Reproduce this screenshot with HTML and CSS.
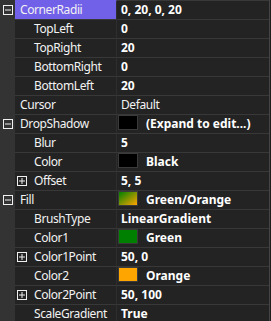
FILE: index.html
```html
<!DOCTYPE html>
<html lang="en">
<head>
  <meta charset="UTF-8">
  <title>Property Grid</title>
  <link rel="stylesheet" href="styles.css">
</head>
<body>
  <div class="grid">
    <div class="row">
      <div class="gutter"><span class="toggle open"></span></div>
      <div class="name selected">CornerRadii</div>
      <div class="value">0, 20, 0, 20</div>
    </div>
    <div class="row">
      <div class="gutter"></div>
      <div class="name child">TopLeft</div>
      <div class="value">0</div>
    </div>
    <div class="row">
      <div class="gutter"></div>
      <div class="name child">TopRight</div>
      <div class="value">20</div>
    </div>
    <div class="row">
      <div class="gutter"></div>
      <div class="name child">BottomRight</div>
      <div class="value">0</div>
    </div>
    <div class="row">
      <div class="gutter"></div>
      <div class="name child">BottomLeft</div>
      <div class="value">20</div>
    </div>
    <div class="row">
      <div class="gutter"></div>
      <div class="name">Cursor</div>
      <div class="value default">Default</div>
    </div>
    <div class="row">
      <div class="gutter"><span class="toggle open"></span></div>
      <div class="name">DropShadow</div>
      <div class="value"><span class="swatch black"></span>(Expand to edit...)</div>
    </div>
    <div class="row">
      <div class="gutter"></div>
      <div class="name child">Blur</div>
      <div class="value">5</div>
    </div>
    <div class="row">
      <div class="gutter"></div>
      <div class="name child">Color</div>
      <div class="value"><span class="swatch black"></span>Black</div>
    </div>
    <div class="row">
      <div class="gutter"></div>
      <div class="name nested"><span class="toggle"></span>Offset</div>
      <div class="value">5, 5</div>
    </div>
    <div class="row">
      <div class="gutter"><span class="toggle open"></span></div>
      <div class="name">Fill</div>
      <div class="value"><span class="swatch gradient"></span>Green/Orange</div>
    </div>
    <div class="row">
      <div class="gutter"></div>
      <div class="name child">BrushType</div>
      <div class="value">LinearGradient</div>
    </div>
    <div class="row">
      <div class="gutter"></div>
      <div class="name child">Color1</div>
      <div class="value"><span class="swatch green"></span>Green</div>
    </div>
    <div class="row">
      <div class="gutter"></div>
      <div class="name nested"><span class="toggle"></span>Color1Point</div>
      <div class="value">50, 0</div>
    </div>
    <div class="row">
      <div class="gutter"></div>
      <div class="name child">Color2</div>
      <div class="value"><span class="swatch orange"></span>Orange</div>
    </div>
    <div class="row">
      <div class="gutter"></div>
      <div class="name nested"><span class="toggle"></span>Color2Point</div>
      <div class="value">50, 100</div>
    </div>
    <div class="row">
      <div class="gutter"></div>
      <div class="name child">ScaleGradient</div>
      <div class="value">True</div>
    </div>
  </div>
</body>
</html>
```
FILE: styles.css
```css
body {
  margin: 0;
  background: #1e1e1e;
  font-family: 'Noto Sans', sans-serif;
  color: #f2f2f2;
}
.grid {
  width: 269px;
  border-right: 1px solid #454545;
  background: #232323;
  overflow: hidden;
}
.row {
  display: flex;
  height: 19px;
}
.gutter {
  width: 15px;
  flex: none;
  background: #333333;
  position: relative;
}
.name {
  width: 96px;
  flex: none;
  padding-left: 5px;
  border-right: 1px solid #2e2e2e;
  border-top: 1px solid #383838;
  font-size: 12px;
  letter-spacing: -0.4px;
  line-height: 18px;
  white-space: nowrap;
  overflow: hidden;
  display: flex;
  align-items: center;
}
.name.selected {
  background: #7160e8;
  border-top-color: #7160e8;
}
.name.child {
  padding-left: 19px;
  width: 82px;
}
.name.nested {
  padding-left: 2px;
  width: 99px;
}
.name.nested .toggle {
  margin-right: 7px;
}
.value {
  flex: 1;
  padding-left: 4px;
  border-top: 1px solid #383838;
  font-size: 12px;
  font-weight: bold;
  color: #fff;
  line-height: 18px;
  white-space: nowrap;
  display: flex;
  align-items: flex-start;
}
.value.default {
  font-weight: normal;
  letter-spacing: -0.4px;
  color: #f2f2f2;
}
.toggle {
  display: inline-block;
  width: 8px;
  height: 8px;
  border: 1px solid #f0f0f0;
  position: relative;
  flex: none;
}
.gutter .toggle {
  position: absolute;
  left: 3px;
  top: 5px;
}
.toggle::before {
  content: '';
  position: absolute;
  left: 1px;
  top: 3px;
  width: 6px;
  height: 2px;
  background: #f0f0f0;
  transform: scaleY(0.5);
}
.toggle:not(.open)::after {
  content: '';
  position: absolute;
  left: 3px;
  top: 1px;
  width: 2px;
  height: 6px;
  background: #f0f0f0;
  transform: scaleX(0.5);
}
.swatch {
  width: 18px;
  height: 13px;
  margin: 0 8px 0 -3px;
  border: 1px solid #3a3a3a;
  flex: none;
}
.swatch.black { background: #000; }
.swatch.green { background: #008000; }
.swatch.orange { background: #ffa500; }
.swatch.gradient { background: linear-gradient(to bottom right, #008000, #ffa500); }
```
